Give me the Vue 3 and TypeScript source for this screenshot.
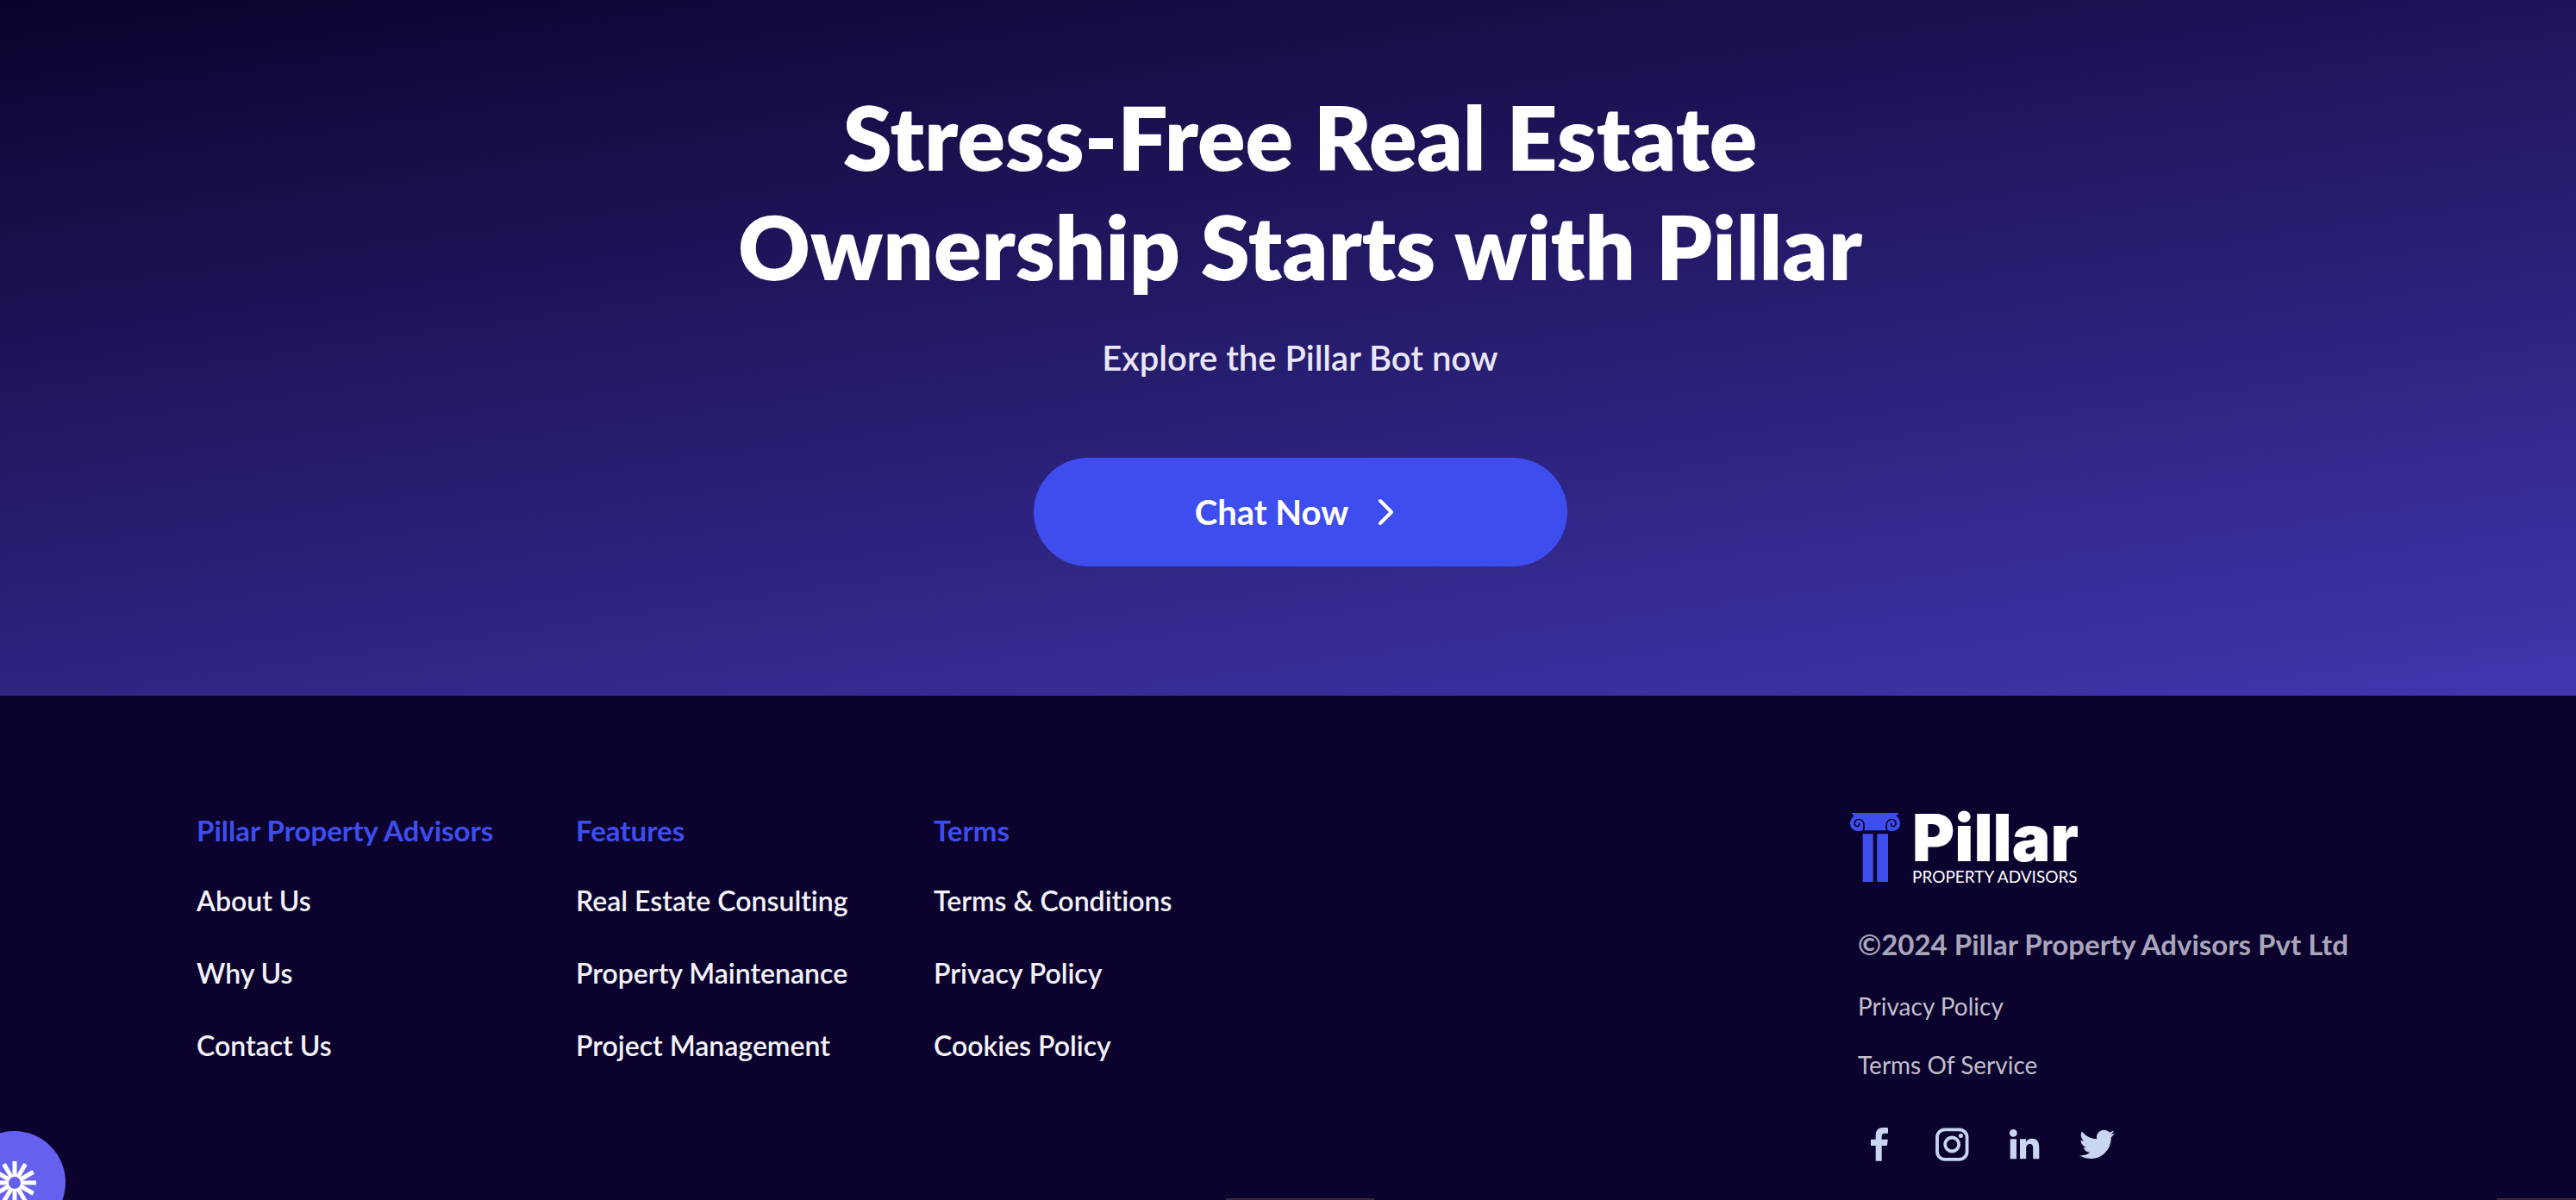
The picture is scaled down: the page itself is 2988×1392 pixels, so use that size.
<script setup lang="ts">
interface LinkGroup {
  title: string
  links: string[]
}

const groups: LinkGroup[] = [
  { title: 'Pillar Property Advisors', links: ['About Us', 'Why Us', 'Contact Us'] },
  { title: 'Features', links: ['Real Estate Consulting', 'Property Maintenance', 'Project Management'] },
  { title: 'Terms', links: ['Terms & Conditions', 'Privacy Policy', 'Cookies Policy'] },
]

const legal: string[] = ['Privacy Policy', 'Terms Of Service']

// Twelve evenly spaced spokes of the assistant mark
const spokes: number[] = Array.from({ length: 12 }, (_, i) => i * 30)
</script>

<template>
  <div class="page">
    <section class="hero">
      <h1>Stress-Free Real Estate<br />Ownership Starts with Pillar</h1>
      <p class="lead">Explore the Pillar Bot now</p>
      <button type="button" class="cta">
        <span>Chat Now</span>
        <svg width="44" height="44" viewBox="0 0 44 44" aria-hidden="true">
          <path d="M15 9l13 13L15 35" fill="none" stroke="currentColor" stroke-width="4" stroke-linecap="round" stroke-linejoin="round" />
        </svg>
      </button>
    </section>

    <footer class="footer">
      <nav class="groups" aria-label="Footer">
        <section v-for="group in groups" :key="group.title">
          <h2>{{ group.title }}</h2>
          <ul>
            <li v-for="link in group.links" :key="link"><a href="#">{{ link }}</a></li>
          </ul>
        </section>
      </nav>

      <div class="brand">
        <div class="logo">
          <svg width="58" height="82" viewBox="0 0 58 82" aria-hidden="true">
            <g fill="#3e4eee">
              <path d="M1.700 0H56.700L53.500 3.500C56.500 5.500 58 8.700 58 12.200C58 17 54.300 21 49.500 21C46.500 21 44 19.800 42.300 20.300H16.200C14 19.800 11.500 21 8.700 21C3.800 21 0 17 0 12.200C0 8.700 1.800 5.500 4.600 3.500Z" />
              <path d="M14.700 24.300H26.700V80H14.700ZM31.300 24.300H44V80H31.300Z" />
            </g>
            <g fill="none" stroke="#0b032d" stroke-width="1.700" stroke-linecap="round">
              <path d="M15.500 20C17.500 14 15.500 7.600 10.200 7.500C5.500 7.500 4 12 6 14.500C7.700 16.500 11.300 15.300 10.500 12.200" />
              <path d="M42.700 20C40.700 14 42.700 7.600 48 7.500C52.700 7.500 54.200 12 52.200 14.500C50.500 16.500 46.900 15.300 47.700 12.200" />
            </g>
          </svg>
          <div class="wordmark">
            <span class="name">Pillar</span>
            <span class="tag">PROPERTY ADVISORS</span>
          </div>
        </div>

        <p class="copyright">©2024 Pillar Property Advisors Pvt Ltd</p>
        <ul class="legal">
          <li v-for="item in legal" :key="item"><a href="#">{{ item }}</a></li>
        </ul>

        <div class="social">
          <a href="#" aria-label="Facebook">
            <svg viewBox="0 0 42 42"><path d="M31 1.200V7.700H27.400C24.600 7.700 23.700 9 23.700 11.200V14.700H30.800L29.900 22H23.700V39.700H16.700V22H11V14.700H16.700V9.800C16.700 4.200 20 1 25.400 1C28 1 31 1.200 31 1.200Z" fill="currentColor" /></svg>
          </a>
          <a href="#" aria-label="Instagram">
            <svg viewBox="0 0 42 42">
              <g fill="none" stroke="currentColor" stroke-width="3.800">
                <rect x="4" y="3.300" width="34.600" height="34.600" rx="9" />
                <circle cx="21.200" cy="20.500" r="8" />
              </g>
              <circle cx="31.400" cy="10.500" r="2.500" fill="currentColor" />
            </svg>
          </a>
          <a href="#" aria-label="LinkedIn">
            <svg viewBox="0 0 42 42">
              <g fill="currentColor">
                <circle cx="8.300" cy="7.400" r="4.400" />
                <path d="M4.700 14.300H12V37.300H4.700Z" />
                <path d="M16 14.300H23V17.500C24.500 15 27 13.700 30 13.700C36.500 13.700 38.300 18 38.300 24V37.300H31.200V25.500C31.200 22.500 30.800 20 27.500 20C24.200 20 23.200 22.500 23.200 25.500V37.300H16Z" />
              </g>
            </svg>
          </a>
          <a href="#" aria-label="Twitter">
            <svg viewBox="0 0 42 42"><path transform="translate(1 0) scale(0.08)" d="M459.370 151.716c.325 4.548.325 9.097.325 13.645 0 138.720-105.583 298.558-298.558 298.558-59.452 0-114.680-17.219-161.137-47.106 8.447.974 16.568 1.299 25.340 1.299 49.055 0 94.213-16.568 130.274-44.832-46.132-.975-84.792-31.188-98.112-72.772 6.498.974 12.995 1.624 19.818 1.624 9.421 0 18.843-1.300 27.614-3.573-48.081-9.747-84.143-51.980-84.143-102.985v-1.299c13.969 7.797 30.214 12.670 47.431 13.319-28.264-18.843-46.781-51.005-46.781-87.391 0-19.492 5.197-37.360 14.294-52.954 51.655 63.675 129.300 105.258 216.365 109.807-1.624-7.797-2.599-15.918-2.599-24.040 0-57.828 46.782-104.934 104.934-104.934 30.213 0 57.502 12.670 76.670 33.137 23.715-4.548 46.456-13.320 66.599-25.340-7.798 24.366-24.366 44.833-46.132 57.827 21.117-2.273 41.584-8.122 60.426-16.243-14.292 20.791-32.161 39.308-52.628 54.253z" fill="currentColor" /></svg>
          </a>
        </div>
      </div>
    </footer>

    <button type="button" class="assistant" aria-label="Open assistant">
      <svg width="60" height="60" viewBox="-30 -30 60 60" aria-hidden="true">
        <rect v-for="angle in spokes" :key="angle" x="-2.500" y="-25" width="5" height="17" fill="#fff" :transform="`rotate(${angle})`" />
        <circle r="8" fill="#6660ee" stroke="#fff" stroke-width="2" />
      </svg>
    </button>
    <div class="edge edge-middle" aria-hidden="true"></div>
    <div class="edge edge-right" aria-hidden="true"></div>
  </div>
</template>

<style>
body {
  margin: 0;
  background: #0b032d;
}
</style>

<style scoped>
.page {
  position: relative;
  display: flex;
  flex-direction: column;
  min-height: 100vh;
  overflow: hidden;
  background: #0b032d;
  color: #fff;
  font-family: Lato, "Noto Sans", sans-serif;
  font-variant-ligatures: none;
}

h1,
h2,
p,
ul {
  margin: 0;
  padding: 0;
}

ul {
  list-style: none;
}

a {
  color: inherit;
  text-decoration: none;
}

button {
  border: 0;
  padding: 0;
  color: inherit;
  font-family: inherit;
  cursor: pointer;
}

.hero {
  display: flex;
  flex-direction: column;
  align-items: center;
  padding: 95px 0 150px 28px;
  background: linear-gradient(172deg, #0b032d, #4136ae);
  text-align: center;
}

h1 {
  font-size: 103px;
  font-weight: 800;
  line-height: 127px;
}

.lead {
  margin-top: 42px;
  color: #e9e7f3;
  font-size: 40px;
  font-weight: 600;
  line-height: 48px;
}

.cta {
  display: flex;
  align-items: center;
  justify-content: center;
  gap: 22px;
  width: 619px;
  height: 126px;
  margin-top: 92px;
  border-radius: 63px;
  background: #3e4eee;
  font-size: 40px;
  font-weight: 700;
}

.footer {
  display: flex;
  flex: 1;
  justify-content: space-between;
  padding: 136px 228px 42px;
}

.groups {
  display: grid;
  grid-template-columns: 440px 415px auto;
  align-content: start;
}

h2 {
  margin-bottom: 42px;
  color: #3e4eee;
  font-size: 33px;
  font-weight: 700;
  line-height: 40px;
}

.groups ul {
  display: grid;
  gap: 44px;
  color: #f3f2f8;
  font-size: 32px;
  font-weight: 600;
  line-height: 40px;
}

.brand {
  width: 614px;
}

.logo {
  display: flex;
  align-items: flex-start;
  gap: 14px;
}

.wordmark {
  display: flex;
  flex-direction: column;
  gap: 4px;
}

.name {
  font-family: Inter, sans-serif;
  font-size: 75px;
  font-weight: 900;
  line-height: 58px;
}

.tag {
  font-size: 19px;
  line-height: 24px;
}

.copyright {
  margin: 46px 0 34px 9px;
  color: #a9a6bb;
  font-size: 33px;
  font-weight: 700;
  line-height: 40px;
}

.legal {
  display: grid;
  gap: 32px;
  margin-left: 9px;
  color: #c2bfcc;
  font-size: 28px;
  line-height: 36px;
}

.social {
  display: flex;
  gap: 42px;
  margin: 54px 0 0 13px;
  color: #c9d6f2;
}

.social a,
.social svg {
  display: block;
  width: 42px;
  height: 42px;
}

.assistant {
  position: absolute;
  bottom: -39px;
  left: -43px;
  display: grid;
  place-items: center;
  width: 119px;
  height: 119px;
  border-radius: 50%;
  background: #6660ee;
}

.edge {
  position: absolute;
  bottom: 0;
  height: 2px;
  background: #342a3a;
}

.edge-middle {
  left: 1422px;
  width: 172px;
}

.edge-right {
  right: 0;
  width: 92px;
}
</style>
